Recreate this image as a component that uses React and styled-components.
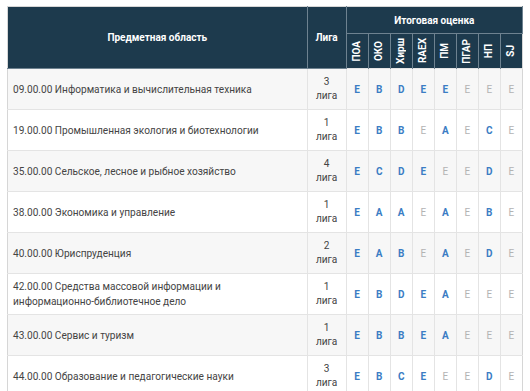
import styled, { createGlobalStyle } from "styled-components";

const GlobalStyle = createGlobalStyle`
  body {
    margin: 0;
    background: #fff;
    font-family: Roboto, "Open Sans", Arial, sans-serif;
  }
`

const Page = styled.div`
  padding: 6px 8px 0 7px;
  height: 391px;
  overflow: hidden;
  box-sizing: border-box;
`

const Table = styled.table`
  width: 516px;
  border-collapse: collapse;
  table-layout: fixed;
  border: 1px solid #d6d6d6;
  font-size: 10.1px;
  color: #444;
`

const HeadCell = styled.th`
  background: #1d3a4d;
  color: #fff;
  font-weight: bold;
  font-size: 10px;
  text-align: center;
  vertical-align: middle;
  padding: 0;
  border: 1px solid #6e8290;
  border-top: none;
  height: ${p => p.$h || 25}px;
  &:first-child { border-left: none; }
`

const RotatedCell = styled(HeadCell)`
  height: 34px;
  font-size: 10px;
  border-bottom: none;
  &:last-child { border-right: none; }
`

const Rotated = styled.div`
  writing-mode: vertical-rl;
  transform: rotate(180deg);
  margin: 0 auto;
  line-height: 12px;
`

const Row = styled.tr`
  background: ${p => (p.$odd ? "#f7f7f7" : "#fff")};
  height: 41px;
`

const Cell = styled.td`
  border: 1px solid #e4e4e4;
  padding: 0 5px;
  vertical-align: middle;
  line-height: 15px;
  &:first-child { border-left: none; }
`

const LeagueCell = styled(Cell)`
  text-align: center;
  padding: 0;
  line-height: 14px;
`

const Grade = styled.td`
  border: 1px solid #e4e4e4;
  text-align: center;
  padding: 0;
  font-size: 10px;
  font-weight: ${p => (p.$on ? "bold" : "normal")};
  color: ${p => (p.$on ? "#3b7dc4" : "#b3b3b3")};
  &:last-child { border-right: none; }
`

const ratings = ["ПОА", "ОКО", "Хирш", "RAEX", "ПМ", "ПГАР", "НП", "SJ"]

// lowercase = grey (no data), uppercase = blue
const data = [
  ["09.00.00 Информатика и вычислительная техника", 3, "EBDEEeee"],
  ["19.00.00 Промышленная экология и биотехнологии", 1, "EBBeAeCe"],
  ["35.00.00 Сельское, лесное и рыбное хозяйство", 4, "ECDEeeDe"],
  ["38.00.00 Экономика и управление", 1, "EAAeAeBe"],
  ["40.00.00 Юриспруденция", 2, "EABeAeDe"],
  ["42.00.00 Средства массовой информации и информационно-библиотечное дело", 1, "EBDEAeee"],
  ["43.00.00 Сервис и туризм", 1, "EBBEAeee"],
  ["44.00.00 Образование и педагогические науки", 3, "EBCEeeDe"],
]

export default function App() {
  return (
    <Page>
      <GlobalStyle />
      <Table>
        <colgroup>
          <col style={{ width: 299 }} />
          <col style={{ width: 39 }} />
          {ratings.map(r => <col key={r} style={{ width: 22 }} />)}
        </colgroup>
        <thead>
          <tr>
            <HeadCell rowSpan={2}>Предметная область</HeadCell>
            <HeadCell rowSpan={2}>Лига</HeadCell>
            <HeadCell colSpan={8} $h={26}>Итоговая оценка</HeadCell>
          </tr>
          <tr>
            {ratings.map(r => (
              <RotatedCell key={r}><Rotated>{r}</Rotated></RotatedCell>
            ))}
          </tr>
        </thead>
        <tbody>
          {data.map(([name, league, grades], i) => (
            <Row key={name} $odd={i % 2 === 0}>
              <Cell>{name}</Cell>
              <LeagueCell>{league}<br />лига</LeagueCell>
              {grades.split("").map((g, j) => (
                <Grade key={j} $on={g === g.toUpperCase()}>{g.toUpperCase()}</Grade>
              ))}
            </Row>
          ))}
        </tbody>
      </Table>
    </Page>
  )
}
